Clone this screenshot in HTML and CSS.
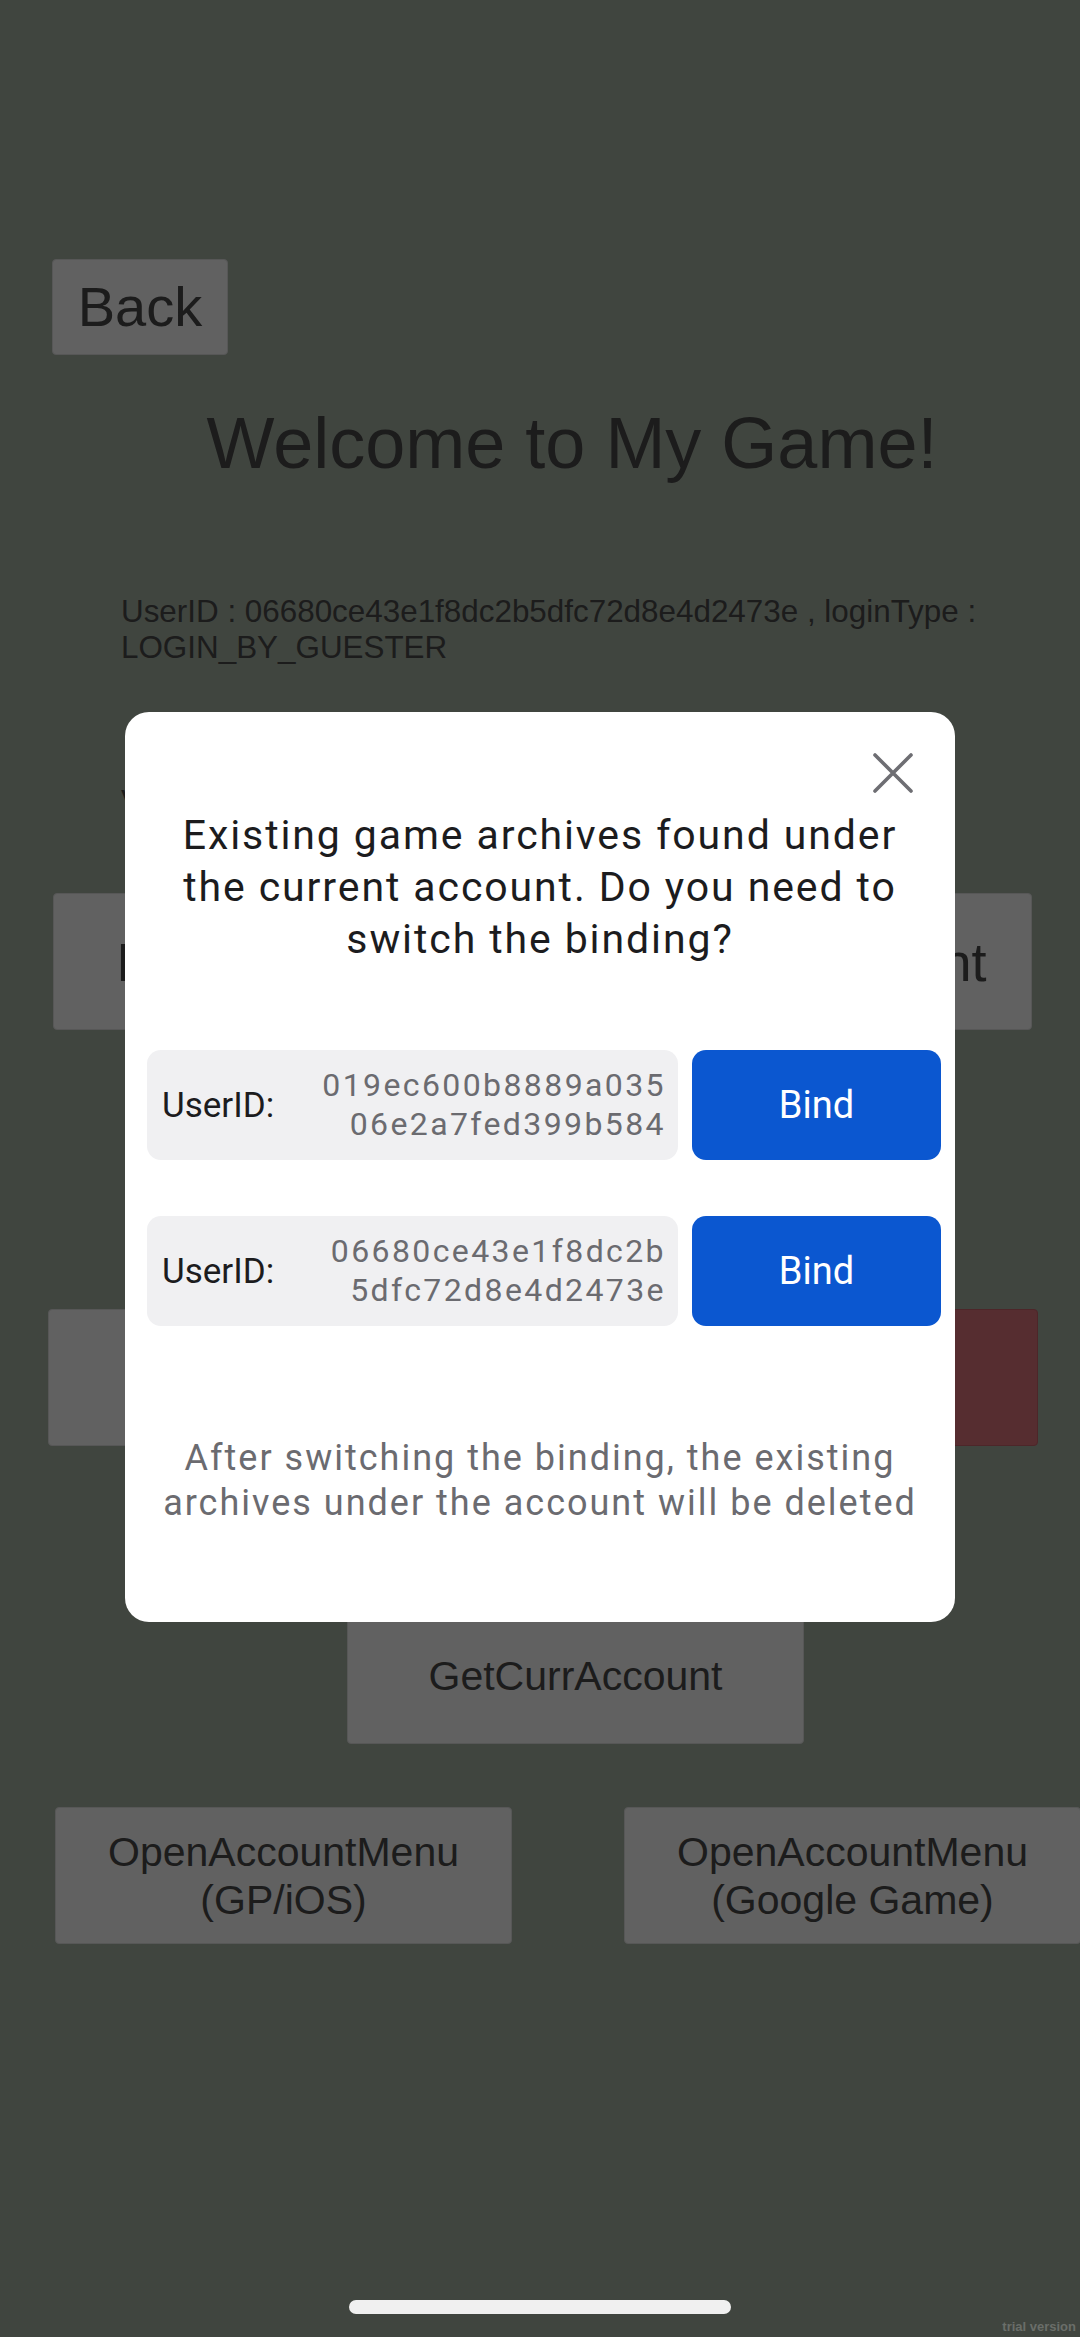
FILE: index.html
```html
<!DOCTYPE html>
<html lang="en">
<head>
    <meta charset="UTF-8">
    <meta name="viewport" content="width=device-width, initial-scale=1.0">
    <title>My Game - Account</title>
    <link rel="stylesheet" href="styles.css">
</head>
<body>
    <div class="screen">
        <button class="game-btn back-btn">Back</button>

        <h1 class="game-title">Welcome to My Game!</h1>

        <p class="info">UserID : 06680ce43e1f8dc2b5dfc72d8e4d2473e , loginType : LOGIN_BY_GUESTER</p>
        <p class="info version">Version : 1.0.0</p>

        <div class="btn-row row-one">
            <button class="game-btn wide-btn">EmailAccount</button>
            <button class="game-btn wide-btn">UnbindAccount</button>
        </div>

        <div class="btn-row row-two">
            <button class="game-btn">Logout</button>
            <button class="game-btn danger-btn">DeleteAccount</button>
        </div>

        <div class="btn-center">
            <button class="game-btn">GetCurrAccount</button>
        </div>

        <div class="btn-row row-menu">
            <button class="game-btn">OpenAccountMenu<br>(GP/iOS)</button>
            <button class="game-btn">OpenAccountMenu<br>(Google Game)</button>
        </div>
    </div>

    <div class="overlay">
        <div class="modal">
            <div class="modal-top">
                <button class="close-btn" aria-label="Close">
                    <svg width="40" height="40" viewBox="0 0 40 40">
                        <path d="M2 2 L38 38 M38 2 L2 38" stroke="#6e6e73" stroke-width="3.6" stroke-linecap="round" fill="none"/>
                    </svg>
                </button>
            </div>

            <p class="modal-title">Existing game archives found under the current account. Do you need to switch the binding?</p>

            <div class="bind-list">
                <div class="bind-row">
                    <div class="bind-info">
                        <span class="bind-label">UserID:</span>
                        <span class="bind-id">019ec600b8889a03506e2a7fed399b584</span>
                    </div>
                    <button class="bind-btn">Bind</button>
                </div>
                <div class="bind-row">
                    <div class="bind-info">
                        <span class="bind-label">UserID:</span>
                        <span class="bind-id">06680ce43e1f8dc2b5dfc72d8e4d2473e</span>
                    </div>
                    <button class="bind-btn">Bind</button>
                </div>
            </div>

            <p class="modal-note">After switching the binding, the existing archives under the account will be deleted</p>
        </div>
    </div>

    <div class="home-bar"></div>
    <div class="watermark">trial version</div>
</body>
</html>
```

FILE: styles.css
```css
* {
    margin: 0;
    padding: 0;
    box-sizing: border-box;
}

body {
    width: 1080px;
    height: 2337px;
    overflow: hidden;
    position: relative;
    font-family: "Liberation Sans", Arial, sans-serif;
    background-color: #818a7f;
}

/* game screen behind the dialog */
.screen {
    display: flex;
    flex-direction: column;
    padding-top: 259px;
}

.game-btn {
    font-family: "Liberation Sans", Arial, sans-serif;
    font-size: 41px;
    line-height: 48px;
    color: #383838;
    background: #c2c2c2;
    border: 1px solid #aeaeae;
    border-radius: 4px;
    width: 457px;
    height: 137px;
}

.back-btn {
    width: 176px;
    height: 96px;
    margin-left: 52px;
    font-size: 56px;
}

.game-title {
    margin-top: 47px;
    padding-left: 64px;
    text-align: center;
    font-size: 72px;
    font-weight: normal;
    line-height: 83px;
    color: #383838;
}

.info {
    margin-top: 109px;
    margin-left: 121px;
    width: 900px;
    font-size: 31.4px;
    line-height: 36px;
    color: #383838;
}

.info.version {
    margin-top: 118px;
}

.btn-row {
    display: flex;
    justify-content: space-between;
}

.row-one {
    margin-top: 73px;
    padding: 0 48px 0 53px;
}

.wide-btn {
    font-size: 54px;
}

.row-two {
    margin-top: 279px;
    padding: 0 42px 0 48px;
}

.danger-btn {
    background: #ac5a60;
    border-color: #9a4c52;
}

.btn-center {
    margin-top: 161px;
    padding-left: 347px;
}

.row-menu {
    margin-top: 63px;
    padding: 0 0 0 55px;
}

.row-menu .game-btn + .game-btn {
    margin-right: -1px;
}

/* dialog */
.overlay {
    position: absolute;
    inset: 0;
    background: rgba(0, 0, 0, 0.5);
    display: flex;
    justify-content: center;
    align-items: flex-start;
    padding-top: 712px;
}

.modal {
    width: 830px;
    height: 910px;
    background: #ffffff;
    border-radius: 24px;
    font-family: Roboto, "Liberation Sans", sans-serif;
    text-align: center;
}

.modal-top {
    display: flex;
    justify-content: flex-end;
    padding: 41px 42px 0 0;
}

.close-btn {
    width: 40px;
    height: 40px;
    border: none;
    background: none;
    display: flex;
}

.modal-title {
    margin-top: 16px;
    padding: 0 30px;
    font-size: 41px;
    line-height: 52px;
    letter-spacing: 1.9px;
    color: #1c1c1e;
}

.bind-list {
    margin-top: 85px;
    padding: 0 14px 0 22px;
    display: flex;
    flex-direction: column;
    gap: 56px;
}

.bind-row {
    display: flex;
    gap: 14px;
    height: 110px;
}

.bind-info {
    flex: 1;
    display: flex;
    align-items: center;
    justify-content: space-between;
    background: #f0f0f2;
    border-radius: 14px;
    padding: 0 12px 0 15px;
}

.bind-label {
    font-size: 35px;
    color: #1c1c1e;
}

.bind-id {
    width: 350px;
    font-size: 32px;
    line-height: 39px;
    letter-spacing: 2.4px;
    color: #6b6b70;
    text-align: right;
    word-break: break-all;
}

.bind-btn {
    width: 249px;
    border: none;
    border-radius: 14px;
    background: #0b57d0;
    color: #ffffff;
    font-family: Roboto, "Liberation Sans", sans-serif;
    font-size: 38px;
}

.modal-note {
    margin-top: 110px;
    padding: 0 20px;
    font-size: 36px;
    line-height: 45px;
    letter-spacing: 2px;
    color: #6b6b70;
}

.home-bar {
    position: absolute;
    left: 349px;
    top: 2300px;
    width: 382px;
    height: 14px;
    border-radius: 7px;
    background: #f0f0f0;
}

.watermark {
    position: absolute;
    right: 4px;
    bottom: 3px;
    font-family: "Liberation Sans Narrow", "Liberation Sans", sans-serif;
    font-size: 13px;
    font-weight: bold;
    color: #6a6e69;
}
```
